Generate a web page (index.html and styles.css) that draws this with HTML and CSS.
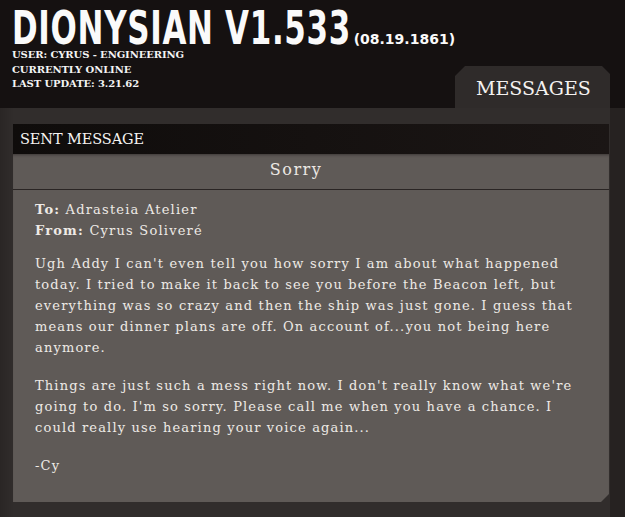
FILE: index.html
```html
<!DOCTYPE html>
<html>
<head>
  <meta charset="UTF-8">
  <title>Dionysian Messages</title>
  <link rel="stylesheet" href="styles.css">
</head>
<body>
  <header class="top">
    <div class="brand">
      <h1 class="title"><span class="name">DIONYSIAN V1.533</span><span class="date">(08.19.1861)</span></h1>
      <ul class="status">
        <li>USER: CYRUS - ENGINEERING</li>
        <li>CURRENTLY ONLINE</li>
        <li>LAST UPDATE: 3.21.62</li>
      </ul>
    </div>
    <nav class="tabs">
      <span class="tab">MESSAGES</span>
    </nav>
  </header>

  <main class="wrap">
    <section class="panel">
      <div class="panel-head">SENT MESSAGE</div>
      <article class="message">
        <h2 class="subject">Sorry</h2>
        <div class="meta">
          <div><b>To:</b> Adrasteia Atelier</div>
          <div><b>From:</b> Cyrus Soliveré</div>
        </div>
        <div class="body">
          <p>Ugh Addy I can't even tell you how sorry I am about what happened today. I tried to make it back to see you before the Beacon left, but everything was so crazy and then the ship was just gone. I guess that means our dinner plans are off. On account of...you not being here anymore.</p>
          <p>Things are just such a mess right now. I don't really know what we're going to do. I'm so sorry. Please call me when you have a chance. I could really use hearing your voice again...</p>
          <p>-Cy</p>
        </div>
      </article>
    </section>
    <div class="edge"></div>
  </main>
</body>
</html>
```

FILE: styles.css
```css
body { margin: 0; width: 625px; height: 517px; overflow: hidden; background: #141010; color: #f2efec; font-family: "DejaVu Serif", serif; }

.top { height: 108px; display: flex; justify-content: space-between; align-items: flex-end; background: #151111; }
.brand { flex: 1; min-width: 0; align-self: flex-start; padding: 8px 0 0 12px; }
.title { margin: 0; height: 40px; display: flex; align-items: baseline; white-space: nowrap; font-family: "DejaVu Sans", sans-serif; font-weight: bold; line-height: 40px; color: #fafafa; }
.name { display: inline-block; font-size: 46px; letter-spacing: 1px; transform: scaleX(0.673); transform-origin: left; margin-right: -162px; }
.date { font-size: 14px; letter-spacing: 0; }
.status { list-style: none; margin: 0; padding: 0; font-family: "DejaVu Serif", serif; font-weight: bold; font-size: 10px; line-height: 14.5px; letter-spacing: -0.1px; color: #f4f4f4; }

.tabs { display: flex; flex-shrink: 0; margin-right: 15px; }
.tab { display: block; width: 155px; height: 42px; box-sizing: border-box; padding: 11px 0 0 21px; background: #2f2b2a; clip-path: polygon(10px 0, calc(100% - 8px) 0, 100% 8px, 100% 100%, 0 100%, 0 10px); font-size: 19px; color: #f4f2f0; }

.wrap { display: grid; grid-template-columns: 610px 15px; height: 409px; }
.panel { background: linear-gradient(to right, #2a2625 0, #312d2c 14px); padding: 16px 1px 0 13px; }
.edge { background: #262221; }

.panel-head { height: 30px; box-sizing: border-box; padding: 7px 0 0 7px; background: linear-gradient(to right, #0f0c0b, #1b1615); font-size: 14.5px; color: #f6f4f2; letter-spacing: -0.1px; }

.message { height: 348px; background: #5f5a57; clip-path: polygon(0 0, 100% 0, 100% calc(100% - 8px), calc(100% - 8px) 100%, 0 100%); box-shadow: inset 0 3px 3px -2px #3d3836; }
.subject { margin: 0; height: 36px; box-sizing: border-box; padding: 6px 30px 0 0; border-bottom: 1px solid #2a2524; text-align: center; font-weight: normal; font-size: 16px; letter-spacing: 1.5px; color: #ece8e4; }

.meta { padding: 9px 0 0 22px; font-size: 13px; line-height: 21px; letter-spacing: 1.2px; color: #eeeae6; }
.meta b { font-weight: bold; }
.body { padding: 12px 14px 0 22px; font-size: 13px; line-height: 21px; letter-spacing: 1.15px; color: #eeeae6; }
.body p { margin: 0 0 17px; }
```
